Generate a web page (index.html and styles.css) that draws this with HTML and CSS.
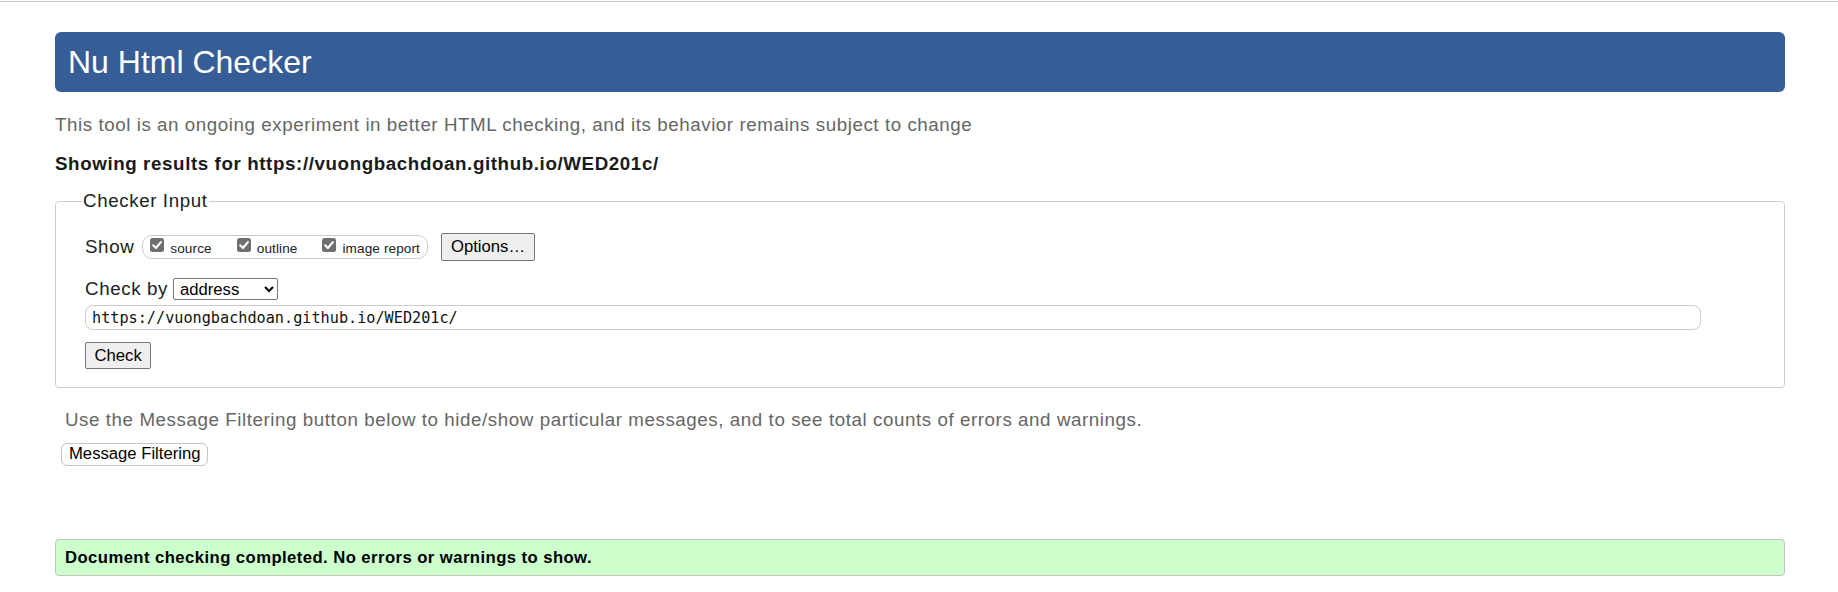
FILE: index.html
```html
<!DOCTYPE html>
<html lang="en">
<head>
<meta charset="utf-8">
<title>Nu Html Checker</title>
<link rel="stylesheet" href="styles.css">
</head>
<body>
<div class="topline"></div>
<main class="page">
  <h1 class="title">Nu Html Checker</h1>
  <p class="subtitle">This tool is an ongoing experiment in better HTML checking, and its behavior remains subject to change</p>
  <p class="results">Showing results for https://vuongbachdoan.github.io/WED201c/</p>
  <form class="checker">
    <fieldset class="checker-box">
      <legend class="checker-legend">Checker Input</legend>
      <div class="row row-show">
        <span class="row-label">Show</span>
        <span class="show-group">
          <label class="opt"><svg class="cb" width="14" height="14" viewBox="0 0 14 14"><rect x="0" y="0" width="14" height="14" rx="2.5" fill="#6f6f6f"/><path d="M3.2 7.3 L5.9 10 L10.9 4.1" fill="none" stroke="#fff" stroke-width="2.1" stroke-linecap="round" stroke-linejoin="round"/></svg><span class="opt-text">source</span></label>
          <label class="opt"><svg class="cb" width="14" height="14" viewBox="0 0 14 14"><rect x="0" y="0" width="14" height="14" rx="2.5" fill="#6f6f6f"/><path d="M3.2 7.3 L5.9 10 L10.9 4.1" fill="none" stroke="#fff" stroke-width="2.1" stroke-linecap="round" stroke-linejoin="round"/></svg><span class="opt-text">outline</span></label>
          <label class="opt"><svg class="cb" width="14" height="14" viewBox="0 0 14 14"><rect x="0" y="0" width="14" height="14" rx="2.5" fill="#6f6f6f"/><path d="M3.2 7.3 L5.9 10 L10.9 4.1" fill="none" stroke="#fff" stroke-width="2.1" stroke-linecap="round" stroke-linejoin="round"/></svg><span class="opt-text">image report</span></label>
        </span>
        <button type="button" class="btn btn-options">Options…</button>
      </div>
      <div class="row row-by">
        <span class="row-label">Check by</span>
        <select class="select"><option>address</option></select>
      </div>
      <input class="url" type="text" value="https://vuongbachdoan.github.io/WED201c/">
      <button type="button" class="btn btn-check">Check</button>
    </fieldset>
  </form>
  <p class="filter-note">Use the Message Filtering button below to hide/show particular messages, and to see total counts of errors and warnings.</p>
  <button type="button" class="btn-filter">Message Filtering</button>
  <div class="success">Document checking completed. No errors or warnings to show.</div>
</main>
</body>
</html>
```

FILE: styles.css
```css
* { box-sizing: border-box; }
html, body { margin: 0; padding: 0; background: #fff; }
body {
  font-family: "Liberation Sans", Arial, sans-serif;
  font-size: 18.75px;
  color: #222;
}
.topline { height: 1px; margin-top: 1px; background: #c6c6c6; }
.page { padding: 0 53px 0 55px; }

.title {
  margin: 30px 0 0;
  height: 60px;
  line-height: 60px;
  padding: 0 13px;
  background: #365d95;
  color: #fff;
  font-size: 32px;
  font-weight: normal;
  border-radius: 6px;
}
.subtitle { margin: 22px 0 0; line-height: 21.5px; color: #666; letter-spacing: 0.56px; }
.results { margin: 17px 0 0; line-height: 21.5px; font-weight: bold; color: #1a1a1a; letter-spacing: 0.6px; }

.checker { margin: 16px 0 0; }
.checker-box {
  margin: 0;
  padding: 0 0 18px 29px;
  border: 1px solid #ccc;
  border-radius: 4px;
  min-width: 0;
}
.checker-legend {
  padding: 0 1px;
  margin-left: -3px;
  line-height: 22px;
  color: #222;
  letter-spacing: 0.6px;
}

.row { display: flex; align-items: center; }
.row-show { margin-top: 21px; height: 28px; }
.row-by { margin-top: 17px; height: 22px; }
.row-label { line-height: 21.5px; letter-spacing: 0.6px; }

.show-group {
  display: flex;
  align-items: flex-start;
  margin-left: 8px;
  height: 24px;
  padding: 1px 7px 0 7px;
  border: 1px solid #ccc;
  border-radius: 10px;
}
.opt { display: flex; align-items: flex-start; font-size: 13.6px; color: #222; }
.opt + .opt { margin-left: 25px; }
.cb { display: block; margin-top: 1px; flex: none; }
.opt-text { margin-left: 6px; margin-top: 4px; line-height: 15.5px; letter-spacing: 0.1px; }

.btn {
  font-family: "Liberation Sans", Arial, sans-serif;
  font-size: 16.67px;
  color: #000;
  background: #efefef;
  border: 1px solid #767676;
  border-radius: 2px;
  padding: 0 8.5px;
  height: 27px;
}
.btn-options { margin-left: 13px; height: 28px; padding: 0 9px; }

.select {
  margin-left: 5px;
  width: 105px;
  height: 22px;
  font-family: "Liberation Sans", Arial, sans-serif;
  font-size: 16.67px;
  color: #000;
  background: #fff;
  border: 1px solid #767676;
  border-radius: 2px;
  padding: 0 2px;
}

.url {
  display: block;
  margin-top: 5px;
  width: 95.1%;
  height: 25px;
  padding: 0 6px;
  font-family: "DejaVu Sans Mono", "Liberation Mono", monospace;
  font-size: 15.2px;
  color: #111;
  border: 1px solid #ccc;
  border-radius: 8px;
  background: #fff;
}
.btn-check { display: block; margin-top: 12px; }

.filter-note { margin: 21px 0 0 10px; line-height: 21.5px; color: #666; letter-spacing: 0.57px; }
.btn-filter {
  display: block;
  margin: 12px 0 0 6px;
  height: 23px;
  padding: 0 7px;
  font-family: "Liberation Sans", Arial, sans-serif;
  font-size: 16.67px;
  color: #000;
  background: #fff;
  border: 1px solid #c4c4c4;
  border-radius: 6px;
}

.success {
  margin-top: 73px;
  padding: 8px 9px;
  font-size: 16.67px;
  line-height: 19.2px;
  font-weight: bold;
  color: #000;
  letter-spacing: 0.44px;
  background: #ccffcc;
  border: 1px solid #c2c2c2;
  border-radius: 4px;
}
```
